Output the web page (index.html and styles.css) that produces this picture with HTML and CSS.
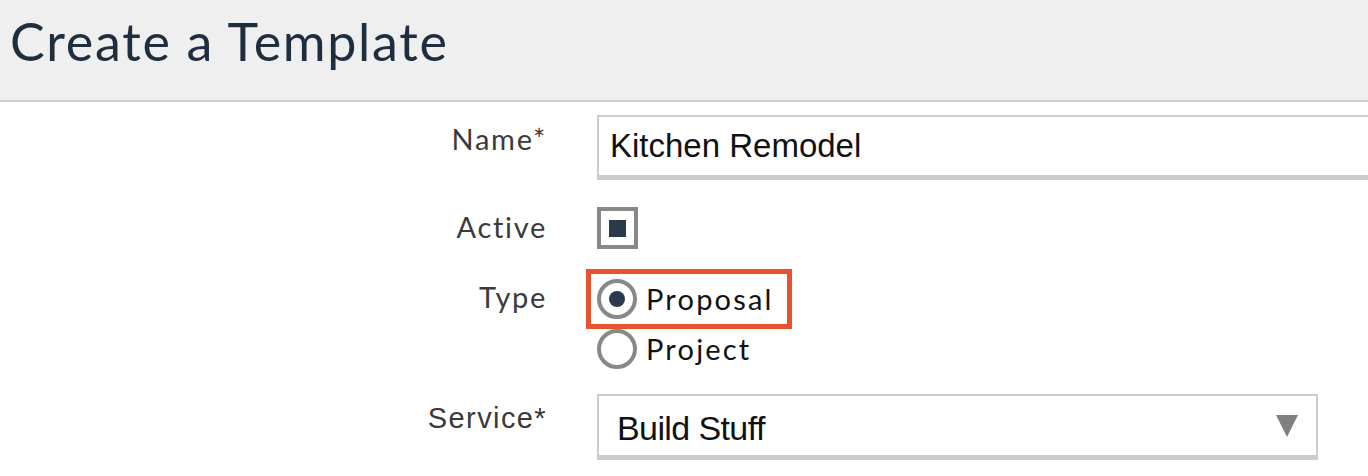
FILE: index.html
```html
<!DOCTYPE html>
<html>
<head>
<meta charset="utf-8">
<link rel="stylesheet" href="styles.css">
</head>
<body>
<header class="page-header">
  <h1 class="title">Create a Template</h1>
</header>
<form class="form">
  <div class="row row-name">
    <label class="label">Name*</label>
    <div class="control">
      <div class="text-input">Kitchen Remodel</div>
    </div>
  </div>
  <div class="row row-active">
    <label class="label">Active</label>
    <div class="control">
      <span class="checkbox"><span class="checkbox-mark"></span></span>
    </div>
  </div>
  <div class="row row-type">
    <label class="label">Type</label>
    <div class="control radios">
      <div class="highlight">
        <span class="radio-option"><span class="radio checked"></span><span class="radio-text">Proposal</span></span>
      </div>
      <span class="radio-option plain"><span class="radio"></span><span class="radio-text">Project</span></span>
    </div>
  </div>
  <div class="row row-service">
    <label class="label label-arial">Service*</label>
    <div class="control">
      <div class="select">
        <span class="select-text">Build Stuff</span>
        <span class="select-arrow"></span>
      </div>
    </div>
  </div>
</form>
</body>
</html>
```

FILE: styles.css
```css
html, body {
  margin: 0;
  padding: 0;
  background: #ffffff;
  overflow: hidden;
}

.page-header {
  height: 100px;
  background: #efefef;
  border-bottom: 2px solid #cfcfcf;
}

.title {
  margin: 0;
  padding: 10px 0 0 10px;
  font-family: "Lato", "Noto Sans", sans-serif;
  font-weight: 400;
  font-size: 52px;
  line-height: 62px;
  letter-spacing: 1.7px;
  color: #1f2e3f;
}

.form {
  padding-top: 13px;
  display: flex;
  flex-direction: column;
}

.row {
  display: grid;
  grid-template-columns: 547px 1fr;
  column-gap: 50px;
  align-items: start;
}

.row-active { margin-top: 27px; }
.row-type { margin-top: 20px; }
.row-service { margin-top: 25px; }

.label {
  text-align: right;
  font-family: "Lato", "Noto Sans", sans-serif;
  font-size: 29px;
  line-height: 34px;
  letter-spacing: 1.7px;
  color: #3a3a3a;
}

.row-name .label { padding-top: 7px; }
.row-active .label { padding-top: 3px; }
.row-type .label { padding-top: 11px; }

.label-arial {
  font-family: "Liberation Sans", Arial, sans-serif;
  font-size: 29px;
  letter-spacing: 1.4px;
}

.row-service .label { padding-top: 7px; }

.control {
  min-width: 0;
}

.text-input {
  box-sizing: border-box;
  width: 820px;
  height: 65px;
  border: 2px solid #cccccc;
  border-bottom-width: 5px;
  padding-left: 11px;
  font-family: "Liberation Sans", Arial, sans-serif;
  font-size: 33px;
  line-height: 58px;
  color: #111111;
  background: #fff;
}

.checkbox {
  box-sizing: border-box;
  display: flex;
  align-items: center;
  justify-content: center;
  width: 41px;
  height: 42px;
  border: 4px solid #888888;
  background: #fff;
}

.checkbox-mark {
  width: 17px;
  height: 17px;
  background: #2b3a4b;
}

.radios {
  display: flex;
  flex-direction: column;
  align-items: flex-start;
}

.highlight {
  box-sizing: border-box;
  margin-left: -11px;
  width: 206px;
  height: 60px;
  border: 5px solid #e8532f;
  padding: 0 6px;
  display: flex;
  align-items: center;
}

.radio-option {
  display: flex;
  align-items: center;
  gap: 9px;
}

.radio {
  box-sizing: border-box;
  width: 40px;
  height: 40px;
  border: 4px solid #888888;
  border-radius: 50%;
  background: #fff;
  display: flex;
  align-items: center;
  justify-content: center;
}

.radio.checked::after {
  content: "";
  width: 16px;
  height: 16px;
  border-radius: 50%;
  background: #2b3a4b;
}

.radio-text {
  font-family: "Lato", "Noto Sans", sans-serif;
  font-size: 29px;
  line-height: 34px;
  letter-spacing: 2.2px;
  color: #111111;
}

.select {
  box-sizing: border-box;
  width: 721px;
  height: 66px;
  border: 2px solid #cccccc;
  border-bottom-width: 5px;
  padding: 0 18px;
  display: flex;
  align-items: center;
  justify-content: space-between;
  background: #fff;
}

.select-text {
  font-family: "Liberation Sans", Arial, sans-serif;
  font-size: 34px;
  letter-spacing: -0.6px;
  color: #111111;
  padding-top: 5px;
}

.select-arrow {
  width: 0;
  height: 0;
  border-left: 11px solid transparent;
  border-right: 11px solid transparent;
  border-top: 22px solid #808080;
}
```
